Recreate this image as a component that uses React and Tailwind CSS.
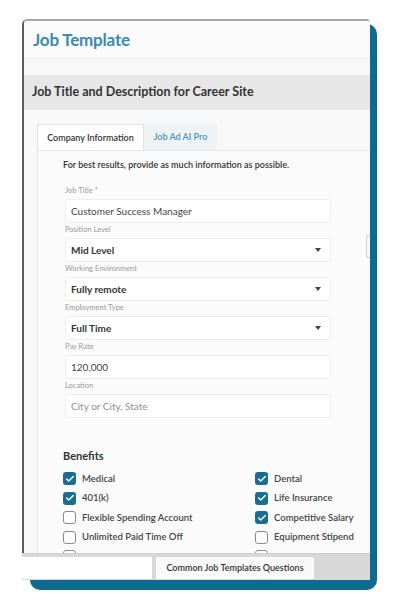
import { Check } from 'lucide-react';

const fields = [
  { label: 'Job Title *', value: 'Customer Success Manager' },
  { label: 'Position Level', value: 'Mid Level', select: true },
  { label: 'Working Environment', value: 'Fully remote', select: true },
  { label: 'Employment Type', value: 'Full Time', select: true },
  { label: 'Pay Rate', value: '120,000' },
  { label: 'Location', value: 'City or City, State', placeholder: true },
];

// last row sits under the bottom bar, only the box tops peek out
const benefits = [
  ['Medical', true],
  ['Dental', true],
  ['401(k)', true],
  ['Life Insurance', true],
  ['Flexible Spending Account', false],
  ['Competitive Salary', true],
  ['Unlimited Paid Time Off', false],
  ['Equipment Stipend', false],
  ['', false],
  ['', false],
];

const Box = ({ checked }) =>
  checked ? (
    <span className="flex h-[13px] w-[13px] shrink-0 items-center justify-center rounded-[3px] bg-[#1a6d92]">
      <Check className="h-[10px] w-[10px] text-white" strokeWidth={3.5} />
    </span>
  ) : (
    <span className="h-[13px] w-[13px] shrink-0 rounded-[3px] border border-[#8a8a8a] bg-white" />
  );

const App = () => {
  return (
    <div className="relative h-[600px] w-[400px] overflow-hidden bg-white pt-[19px] pl-[22px]" style={{ fontFamily: 'Lato, "Noto Sans", sans-serif' }}>
      {/* teal backing card */}
      <div className="absolute left-[30px] top-[24px] h-[566px] w-[347px] rounded-[10px] bg-[#0f6a8f]" />

      <div className="relative z-10 flex h-[561px] w-[348px] flex-col overflow-hidden rounded-tl-[5px] rounded-tr-[4px] bg-[#f7f7f7]">
        <div className="flex min-h-0 flex-1 flex-col overflow-hidden rounded-tl-[5px] border-l-2 border-t-2 border-l-[#5e5e5e] border-t-[#a5a5a5]">
          {/* header */}
          <div className="flex h-[38px] shrink-0 items-center border-b border-[#ececec] bg-[#fbfbfb] pl-[9px]">
            <h1 className="text-[17px] font-bold tracking-[-0.2px] text-[#3a8ab0]">Job Template</h1>
          </div>
          <div className="h-[16px] shrink-0 bg-[#f8f8f8]" />
          <div className="flex h-[35px] shrink-0 items-center bg-[#e7e7e7] pl-[8px]">
            <h2 className="text-[12.5px] font-bold text-[#333]">Job Title and Description for Career Site</h2>
          </div>

          {/* tabs */}
          <div className="flex min-h-0 flex-1 flex-col bg-[#f8f8f8] pl-[13px] pt-[14px]">
            <div className="flex h-[26px] shrink-0 items-stretch">
              <div className="flex w-[107px] items-center justify-center border border-b-0 border-[#e2e2e2] bg-white text-[9px] font-semibold text-[#333]">
                Company Information
              </div>
              <div className="flex w-[73px] items-center justify-center bg-[#eef2f4] text-[9px] font-semibold text-[#4b93b8]">
                Job Ad AI Pro
              </div>
            </div>

            <div className="relative min-h-0 flex-1 border-l border-t border-[#e6e6e6] bg-[#fbfbfb] pl-[25px] pt-[8px]">
              <p className="text-[9px] leading-[12px] font-semibold text-[#333]">
                For best results, provide as much information as possible.
              </p>

              <div className="mt-[13px] flex w-[268px] flex-col pl-[2px]">
                {fields.map((f) => (
                  <div key={f.label} className="flex shrink-0 flex-col">
                    <label className="h-[15px] text-[7.5px] leading-[13px] text-[#9a9a9a]">{f.label}</label>
                    <div className="flex h-[24px] items-center justify-between rounded-[3px] border border-[#eeeeee] bg-white px-[5px]">
                      <span
                        className={
                          f.select
                            ? 'text-[10px] font-bold text-[#333]'
                            : f.placeholder
                            ? 'text-[10px] text-[#8f8f8f]'
                            : 'text-[10px] text-[#444]'
                        }
                      >
                        {f.value}
                      </span>
                      {f.select && <span className="mr-[4px] h-0 w-0 border-x-[3px] border-t-[4px] border-x-transparent border-t-[#444]" />}
                    </div>
                  </div>
                ))}
              </div>

              <h3 className="mt-[31px] text-[11px] leading-[14px] font-bold text-[#333]">Benefits</h3>
              <div className="mt-[6px] grid grid-cols-[192px_1fr]">
                {benefits.map(([name, checked], i) => (
                  <div key={i} className="flex h-[19.5px] items-center gap-[6px] whitespace-nowrap">
                    <Box checked={checked} />
                    {name && <span className="text-[9.5px] font-semibold text-[#444]">{name}</span>}
                  </div>
                ))}
              </div>

              {/* clipped right column hints */}
              <div className="absolute left-[328px] top-[84px] h-[23px] w-[6px] rounded-l-[3px] border border-r-0 border-[#cfcfcf]" />
            </div>
          </div>
        </div>

        {/* bottom bar */}
        <div className="flex h-[27px] shrink-0 items-center gap-[4px] border-t border-[#cfcfcf] bg-[#d8d8d8] pt-[1px]">
          <div className="h-[22px] w-[130px] bg-white" />
          <div className="flex h-[22px] w-[158px] items-center justify-center whitespace-nowrap rounded-[2px] bg-[#f9f9f9] text-[9px] font-semibold text-[#333]">
            Common Job Templates Questions
          </div>
        </div>
      </div>
    </div>
  );
};

export default App;
